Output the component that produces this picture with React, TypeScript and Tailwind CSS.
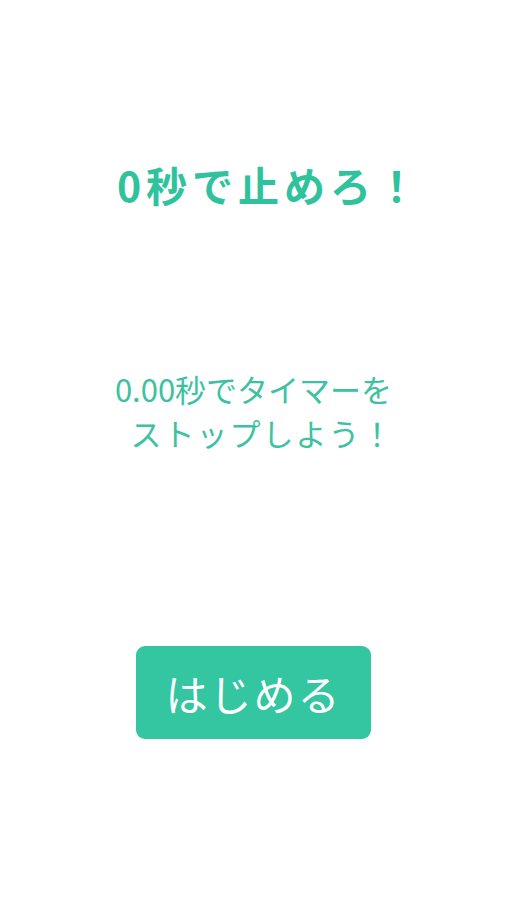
export default function App() {
  return (
    <div
      className="w-[507px] h-[900px] bg-white flex flex-col items-center"
      style={{ fontFamily: '"Noto Sans CJK JP", "Noto Sans", sans-serif' }}
    >
      <h1 className="mt-[162px] ml-[32px] h-[44px] leading-[44px] text-[41px] font-bold tracking-[5px] text-[#2fc39d]">
        0秒で止めろ！
      </h1>
      <p className="mt-[161px] text-center text-[31px] leading-[44px] text-[#3dc2a1]">
        <span className="block">0.00秒でタイマーを</span>
        <span className="block tracking-[2px] ml-[18px]">ストップしよう！</span>
      </p>
      <button className="mt-[191px] w-[235px] h-[93px] rounded-[9px] bg-[#33c6a1] text-white text-[42px] leading-none tracking-[2px]">
        はじめる
      </button>
    </div>
  );
}
